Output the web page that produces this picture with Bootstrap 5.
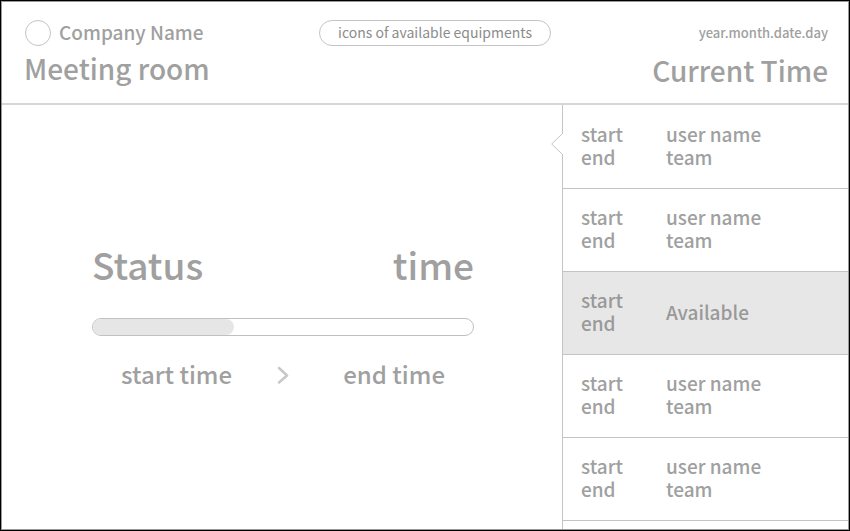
<!DOCTYPE html>
<html lang="en">
<head>
<meta charset="utf-8">
<meta name="viewport" content="width=device-width, initial-scale=1">
<title>Meeting room</title>
<link href="https://cdn.jsdelivr.net/npm/bootstrap@5.3.0/dist/css/bootstrap.min.css" rel="stylesheet">
<style>
  body { font-family: "Noto Sans CJK SC", "Noto Sans", sans-serif; font-weight: 500; color: #a0a0a0; background: #fff; }
  .frame { min-height: 100vh; border: 1px solid #000; box-shadow: inset 0 0 0 1px #999; padding: 1px; }
  .topbar { display: grid; grid-template-columns: 1fr auto 1fr; padding: 18px 20px 8px 22px; border-bottom: 2px solid #d6d6d6; }
  .logo { width: 26px; height: 26px; border: 1px solid #c4c4c4; border-radius: 50%; margin-left: 1px; }
  .company { font-size: 19px; line-height: 24px; padding-bottom: 2px; }
  .room { font-size: 28px; line-height: 44px; }
  .clock { font-size: 28px; line-height: 49px; }
  .equipment { font-size: 14px; font-weight: 400; line-height: 22px; padding: 0 18px 2px; margin-left: 18px; border: 1px solid #c4c4c4; color: #8c8c8c; }
  .date { font-size: 13px; line-height: 26px; }
  .status-pane { padding: 0 88px 7px 90px; }
  .status { font-size: 37px; line-height: 54px; }
  .meter { height: 18px; margin-top: 27px; background: #fff; border: 1px solid #c0c0c0; border-radius: 9px; }
  .meter .progress-bar { background: #e6e6e6; border-radius: 8px; }
  .period { font-size: 24px; line-height: 32px; margin-top: 22px; padding: 0 29px; }
  .period svg { margin-right: 10px; }
  .schedule { flex: 0 0 286px; border-left: 1px solid #c4c4c4; padding-top: 1px; }
  .pointer { left: -12px; top: 27px; }
  .slot { min-height: 83px; padding: 0 18px 4px; border-bottom: 1px solid #c4c4c4; font-size: 19px; line-height: 23px; }
  .slot-free { background: #e7e7e7; color: #999; }
  .slot-time { flex: 0 0 85px; }
</style>
<script src="https://cdn.jsdelivr.net/npm/bootstrap@5.3.0/dist/js/bootstrap.bundle.min.js"></script>
</head>
<body>
<div class="frame d-flex flex-column">
  <header class="topbar align-items-start">
    <div>
      <div class="d-flex align-items-center gap-2">
        <span class="logo"></span>
        <span class="company">Company Name</span>
      </div>
      <div class="room">Meeting room</div>
    </div>
    <div class="equipment rounded-pill">icons of available equipments</div>
    <div class="text-end">
      <div class="date">year.month.date.day</div>
      <div class="clock">Current Time</div>
    </div>
  </header>
  <div class="d-flex flex-fill">
    <main class="status-pane flex-fill d-flex flex-column justify-content-center">
      <div class="status d-flex justify-content-between">
        <span>Status</span>
        <span>time</span>
      </div>
      <div class="progress meter" role="progressbar" aria-label="Meeting progress" aria-valuenow="37" aria-valuemin="0" aria-valuemax="100">
        <div class="progress-bar" style="width: 37%"></div>
      </div>
      <div class="period d-flex justify-content-between align-items-center">
        <span>start time</span>
        <svg width="12" height="20" viewBox="0 0 12 20" fill="none" stroke="#c8c8c8" stroke-width="2.5" stroke-linecap="round" stroke-linejoin="round" aria-hidden="true"><path d="M2 4l8 7.500-8 7"/></svg>
        <span>end time</span>
      </div>
    </main>
    <aside class="schedule position-relative">
      <svg class="pointer position-absolute" width="13" height="24" viewBox="0 0 13 24" fill="none" aria-hidden="true"><path d="M11.500 2v20" stroke="#fff" stroke-width="3"/><path d="M11.500 0v1.500L.7 12l10.800 10.500V24" stroke="#c4c4c4"/></svg>
      <div class="slot d-flex align-items-center"><div class="slot-time"><div>start</div><div>end</div></div><div><div>user name</div><div>team</div></div></div>
      <div class="slot d-flex align-items-center"><div class="slot-time"><div>start</div><div>end</div></div><div><div>user name</div><div>team</div></div></div>
      <div class="slot slot-free d-flex align-items-center"><div class="slot-time"><div>start</div><div>end</div></div><div>Available</div></div>
      <div class="slot d-flex align-items-center"><div class="slot-time"><div>start</div><div>end</div></div><div><div>user name</div><div>team</div></div></div>
      <div class="slot d-flex align-items-center"><div class="slot-time"><div>start</div><div>end</div></div><div><div>user name</div><div>team</div></div></div>
    </aside>
  </div>
</div>
</body>
</html>
